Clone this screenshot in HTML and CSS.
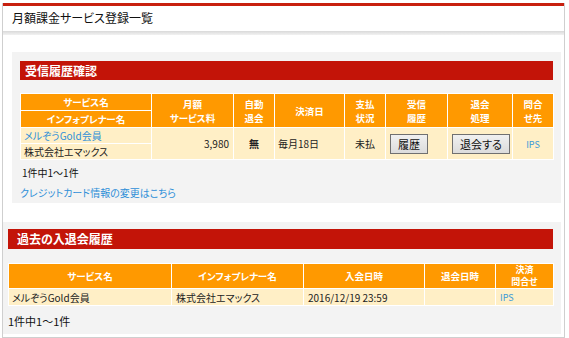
FILE: index.html
```html
<!DOCTYPE html>
<html lang="ja">
<head>
    <meta charset="UTF-8">
    <title>月額課金サービス登録一覧</title>
    <link rel="stylesheet" href="styles.css">
</head>
<body>
    <div class="page">
        <div class="page-head">
            <h1>月額課金サービス登録一覧</h1>
        </div>

        <!-- 受信履歴確認 -->
        <div class="panel panel-current">
            <h2 class="bar">受信履歴確認</h2>
            <table class="list list-current">
                <colgroup>
                    <col style="width:131px"><col style="width:82px"><col style="width:41px"><col style="width:70px">
                    <col style="width:41px"><col style="width:62px"><col style="width:65px"><col style="width:41px">
                </colgroup>
                <tr class="head">
                    <th>サービス名</th>
                    <th rowspan="2" class="two">月額<br>サービス料</th>
                    <th rowspan="2" class="two">自動<br>退会</th>
                    <th rowspan="2">決済日</th>
                    <th rowspan="2" class="two">支払<br>状況</th>
                    <th rowspan="2" class="two">受信<br>履歴</th>
                    <th rowspan="2" class="two">退会<br>処理</th>
                    <th rowspan="2" class="two">問合<br>せ先</th>
                </tr>
                <tr class="head">
                    <th>インフォプレナー名</th>
                </tr>
                <tr>
                    <td><a href="#">メルぞうGold会員</a></td>
                    <td rowspan="2" class="num">3,980</td>
                    <td rowspan="2" class="center strong">無</td>
                    <td rowspan="2">毎月18日</td>
                    <td rowspan="2" class="center">未払</td>
                    <td rowspan="2"><button class="btn">履歴</button></td>
                    <td rowspan="2"><button class="btn">退会する</button></td>
                    <td rowspan="2" class="center"><a href="#" class="small-link">IPS</a></td>
                </tr>
                <tr>
                    <td>株式会社エマックス</td>
                </tr>
            </table>
            <p class="count">1件中1〜1件</p>
            <p class="card-link"><a href="#">クレジットカード情報の変更はこちら</a></p>
        </div>

        <!-- 過去の入退会履歴 -->
        <div class="panel panel-past">
            <h2 class="bar">過去の入退会履歴</h2>
            <table class="list list-past">
                <colgroup>
                    <col style="width:163px"><col style="width:132px"><col style="width:121px"><col style="width:71px"><col style="width:58px">
                </colgroup>
                <tr class="head">
                    <th>サービス名</th>
                    <th>インフォプレナー名</th>
                    <th>入会日時</th>
                    <th>退会日時</th>
                    <th class="two">決済<br>問合せ</th>
                </tr>
                <tr>
                    <td>メルぞうGold会員</td>
                    <td>株式会社エマックス</td>
                    <td>2016/12/19 23:59</td>
                    <td></td>
                    <td><a href="#" class="small-link">IPS</a></td>
                </tr>
            </table>
            <p class="count">1件中1〜1件</p>
        </div>
    </div>
</body>
</html>
```

FILE: styles.css
```css
* {
    box-sizing: border-box;
}

body {
    margin: 0;
    background: #fff;
    color: #222;
    font-family: "Noto Sans CJK JP", "Noto Sans", sans-serif;
    font-feature-settings: "palt";
    font-size: 10px;
}

a {
    color: #2f8fd8;
    text-decoration: none;
}

/* outer frame */
.page {
    width: 563px;
    height: 335px;
    margin-left: 2px;
    border-left: 1px solid #cfcfcf;
    border-right: 1px solid #cfcfcf;
    border-bottom: 1px solid #cfcfcf;
}

/* page title */
.page-head {
    margin-top: 3px;
    height: 32px;
    border-top: 3px solid #c8200f;
    background: linear-gradient(to bottom, #fff 0, #fff 25px, #d9d9d9 25px, #f2f2f2 29px);
}

.page-head h1 {
    margin: 0;
    padding-left: 9px;
    height: 25px;
    line-height: 23px;
    font-size: 12px;
    font-weight: normal;
    color: #111;
}

/* gray panels */
.panel {
    background: #f3f3f3;
}

.panel-current {
    width: 549px;
    margin: 17px 0 0 9px;
    padding: 9px 8px 3px 8px;
}

.panel-past {
    width: 558px;
    margin-top: 19px;
    padding: 7px 8px 6px 5px;
}

.bar {
    margin: 0;
    background: #c31408;
    color: #fff;
    font-size: 12px;
    font-weight: bold;
}

.panel-current .bar {
    height: 19px;
    line-height: 19px;
    padding-left: 5px;
}

.panel-past .bar {
    height: 20px;
    line-height: 20px;
    padding-left: 9px;
}

/* tables */
.list {
    width: 100%;
    table-layout: fixed;
    border-collapse: collapse;
}

.list-current {
    margin-top: 13px;
}

.list-past {
    margin-top: 14px;
}

.list th,
.list td {
    border: 1px solid #fff;
    padding: 0 3px;
    white-space: nowrap;
}

.list th {
    background: #ff9900;
    color: #fff;
    font-size: 9.5px;
    font-weight: bold;
    line-height: 12px;
    text-align: center;
}

.list-current th {
    height: 17px;
}

.list-current th.two {
    line-height: 14px;
}

.list-past th {
    height: 25px;
}

.list-past th.two {
    font-size: 9px;
    line-height: 12px;
}

.list td {
    background: #ffefc6;
    height: 17px;
    line-height: 15px;
    color: #222;
}

.list-current td {
    height: 16px;
}

.list-past td {
    padding-left: 3px;
}

.list-past td:nth-child(2),
.list-past td:nth-child(3),
.list-past td:nth-child(5) {
    padding-left: 4px;
}

.num {
    text-align: right;
    padding-right: 4px !important;
}

.center {
    text-align: center;
}

.strong {
    font-weight: bold;
}

.small-link {
    font-size: 9px;
    color: #3a9ad8;
}

.btn {
    height: 20px;
    margin-left: 1px;
    padding: 0 7px;
    border: 1px solid #707070;
    border-radius: 0;
    background: linear-gradient(to bottom, #f0f0f0, #dcdcdc);
    color: #111;
    font-family: inherit;
    font-feature-settings: "palt";
    font-size: 11px;
    line-height: 18px;
}

/* footers */
.count {
    margin: 6px 0 0 0;
    height: 14px;
    line-height: 14px;
    padding-left: 2px;
    color: #111;
}

.panel-past .count {
    margin-top: 8px;
    padding-left: 0;
    font-size: 11px;
}

.card-link {
    margin: 6px 0 0 0;
    height: 14px;
    line-height: 14px;
    font-size: 10px;
}
```
